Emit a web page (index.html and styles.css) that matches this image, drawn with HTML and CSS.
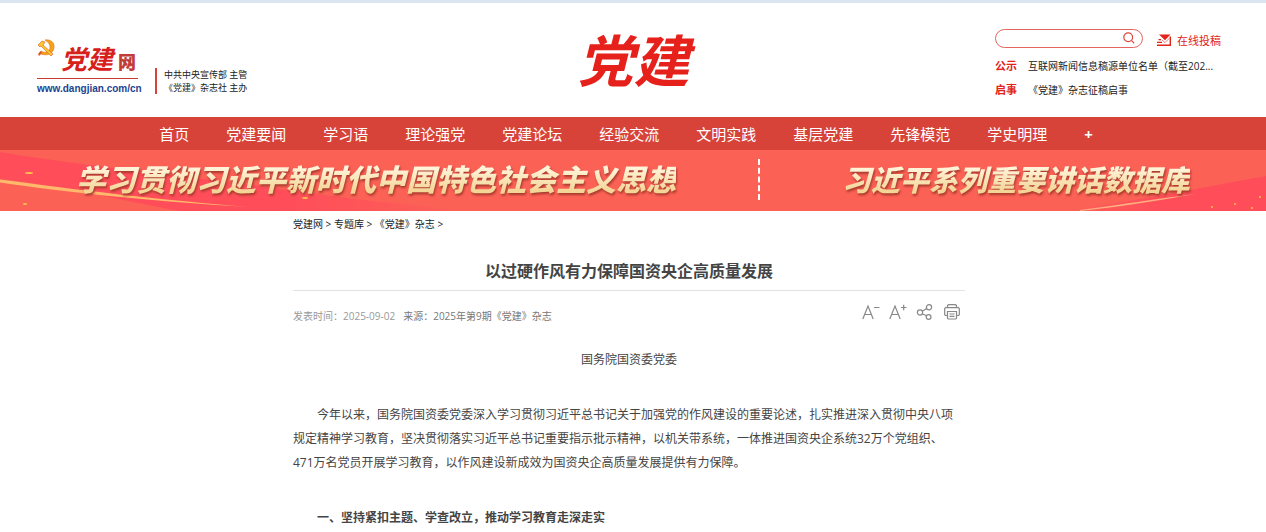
FILE: index.html
```html
<!DOCTYPE html>
<html lang="zh-CN">
<head>
  <meta charset="UTF-8" />
  <meta name="viewport" content="width=device-width, initial-scale=1.0"/>
  <title>以过硬作风有力保障国资央企高质量发展 - 党建网</title>
  <link rel="stylesheet" href="styles.css">
</head>
<body>
  <header class="header">
    <div class="brand">
      <a class="logo" href="#">
        <span class="logo-top">
          <svg class="emblem" viewBox="0 0 18 18" aria-hidden="true">
            <path d="M8 1C14 0 18 4 17 9C16 15 9 18 2 14L4 12C9 15 13 12 13 8C13 5 11 3 8 1Z" fill="#f3a21b" stroke="#e8741c" stroke-width=".6"/>
            <path d="M1 6L5 2L8 3L6 6L16 15L14 17L4 7L3 8Z" fill="#f8c832" stroke="#e4571c" stroke-width=".6"/>
            <path d="M1 15L4 12L5 14L2 17Z" fill="#e4571c"/>
          </svg>
          <span class="logo-name">党建</span>
          <span class="logo-net">网</span>
        </span>
        <span class="logo-url">www.dangjian.com/cn</span>
      </a>
      <p class="sponsor">中共中央宣传部 主管<br>《党建》杂志社 主办</p>
    </div>

    <div class="masthead">党建</div>

    <div class="tools">
      <form class="search-row">
        <div class="search">
          <input type="text" aria-label="搜索">
          <button type="button" aria-label="搜索">
            <svg viewBox="0 0 12 12" aria-hidden="true">
              <circle cx="5.2" cy="5.2" r="4.4"/>
              <path d="M8.6 8.6L11.2 11.4"/>
            </svg>
          </button>
        </div>
        <a class="submit" href="#">
          <svg viewBox="0 0 14 12" aria-hidden="true">
            <path d="M2 .5H13.5L8 6.2Z" fill="#e2231a"/>
            <path d="M13.3 2.5V11.3H0M0 8.4H5M1.5 5.6H4" fill="none" stroke="#e2231a" stroke-width="1.4"/>
            <path d="M5 6L8 8.6L12.6 4" fill="none" stroke="#f0807a"/>
          </svg>
          在线投稿
        </a>
      </form>
      <div class="notice"><b>公示</b><a href="#">互联网新闻信息稿源单位名单（截至202...</a></div>
      <div class="notice"><b>启事</b><a href="#">《党建》杂志征稿启事</a></div>
    </div>
  </header>

  <nav class="nav">
    <a href="#">首页</a>
    <a href="#">党建要闻</a>
    <a href="#">学习语</a>
    <a href="#">理论强党</a>
    <a href="#">党建论坛</a>
    <a href="#">经验交流</a>
    <a href="#">文明实践</a>
    <a href="#">基层党建</a>
    <a href="#">先锋模范</a>
    <a href="#">学史明理</a>
    <a class="more" href="#">+</a>
  </nav>

  <div class="banner">
    <svg class="banner-bg" viewBox="0 0 1266 61" preserveAspectRatio="none" aria-hidden="true">
      <defs>
        <linearGradient id="fade-right">
          <stop offset="0" stop-color="#ff4d5a"/>
          <stop offset=".6" stop-color="#ff4d5a"/>
          <stop offset="1" stop-color="#fc6156"/>
        </linearGradient>
        <linearGradient id="fade-left">
          <stop offset="0" stop-color="#fc6156"/>
          <stop offset=".5" stop-color="#ff4d5a"/>
          <stop offset="1" stop-color="#ff4d5a"/>
        </linearGradient>
      </defs>
      <path d="M0 2C60 12 130 20 260 36C340 48 400 54 470 61H180C120 50 50 34 0 29Z" fill="url(#fade-right)"/>
      <path d="M1060 61C1130 52 1200 38 1266 26V61Z" fill="url(#fade-left)"/>
      <path d="M0 29.5C70 39 160 50 250 57C160 52 70 43 0 32.5Z" fill="#ffb96b"/>
      <path d="M1080 60C1120 55 1160 48 1196 44C1160 50 1120 57 1080 61Z" fill="#ffb080"/>
      <g fill="#ffc04d">
        <ellipse cx="29" cy="23" rx="4" ry="1"/>
        <ellipse cx="25" cy="54" rx="2" ry="1"/>
        <ellipse cx="305" cy="48" rx="3" ry="1"/>
        <circle cx="1212" cy="57" r="1"/>
        <circle cx="1235" cy="54" r="1"/>
        <circle cx="1260" cy="47" r="1"/>
        <circle cx="1252" cy="58" r="1"/>
      </g>
    </svg>
    <a class="slogan" href="#">学习贯彻习近平新时代中国特色社会主义思想</a>
    <span class="divider"></span>
    <a class="slogan slogan-small" href="#">习近平系列重要讲话数据库</a>
  </div>

  <main class="article">
    <div class="crumbs"><a href="#">党建网</a> &gt; <a href="#">专题库</a> &gt; <a href="#">《党建》杂志</a> &gt;</div>
    <h1>以过硬作风有力保障国资央企高质量发展</h1>
    <div class="meta">
      <span class="date">发表时间：2025-09-02</span>
      <span class="source">来源：2025年第9期《党建》杂志</span>
      <div class="actions">
        <button type="button" aria-label="缩小字号">
          <svg viewBox="0 0 18 16" aria-hidden="true"><path d="M.8 15L6 2L11.2 15M2.6 10.5H9.4M12 3.5H17.5"/></svg>
        </button>
        <button type="button" aria-label="放大字号">
          <svg viewBox="0 0 18 16" aria-hidden="true"><path d="M.8 15L6 2L11.2 15M2.6 10.5H9.4M12 3.5H17.5M14.7 .8V6.2"/></svg>
        </button>
        <button type="button" aria-label="分享">
          <svg viewBox="0 0 18 16" aria-hidden="true">
            <circle cx="4" cy="8.5" r="2.6"/><circle cx="13" cy="3.2" r="2.6"/><circle cx="12.6" cy="13" r="2.4"/>
            <path d="M6.2 7.2L10.8 4.5M6.2 9.8L10.5 11.8"/>
          </svg>
        </button>
        <button type="button" aria-label="打印">
          <svg viewBox="0 0 18 16" aria-hidden="true">
            <path d="M4.5 3.5V1.5L5.5 .7H12.5L13.5 1.5V3.5M4.5 11.5H2.5L1.7 10.7V4.5L2.7 3.6H15.3L16.3 4.5V10.7L15.5 11.5H13.5M4.5 7.5H13.5V14.3L12.8 15H5.2L4.5 14.3ZM6.5 10H11.5M6.5 12.4H11.5"/>
          </svg>
        </button>
      </div>
    </div>
    <div class="content">
      <p class="author">国务院国资委党委</p>
      <p>今年以来，国务院国资委党委深入学习贯彻习近平总书记关于加强党的作风建设的重要论述，扎实推进深入贯彻中央八项规定精神学习教育，坚决贯彻落实习近平总书记重要指示批示精神，以机关带系统，一体推进国资央企系统32万个党组织、471万名党员开展学习教育，以作风建设新成效为国资央企高质量发展提供有力保障。</p>
      <p><strong>一、坚持紧扣主题、学查改立，推动学习教育走深走实</strong></p>
    </div>
  </main>
</body>
</html>
```

FILE: styles.css
```css
* {
  box-sizing: border-box;
}
body {
  margin: 0;
  font-family: "Open Sans", "Noto Sans CJK SC", sans-serif;
  font-size: 12px;
  color: #444;
  background: #fff;
}
a {
  color: inherit;
  text-decoration: none;
}
p {
  margin: 0;
}
button {
  padding: 0;
  border: none;
  background: none;
  cursor: pointer;
}
svg {
  display: block;
}

/* header */
.header {
  display: grid;
  grid-template-columns: 1fr auto 1fr;
  align-items: center;
  min-height: 117px;
  padding: 0 46px 0 37px;
  border-top: 3px solid #dce6f2;
}
.brand {
  display: flex;
  align-items: flex-end;
  gap: 17px;
  padding-top: 18px;
}
.logo {
  width: 101px;
}
.logo-top {
  display: flex;
  align-items: flex-end;
  height: 40px;
  border-bottom: 1px solid #c8372f;
}
.emblem {
  width: 18px;
  height: 18px;
  align-self: flex-start;
}
.logo-name {
  margin-left: 6px;
  font-size: 26px;
  font-weight: 700;
  font-style: italic;
  line-height: 38px;
  color: #d7201b;
}
.logo-net {
  margin-left: 5px;
  font-size: 18px;
  font-weight: 900;
  line-height: 32px;
  color: #c23b37;
}
.logo-url {
  display: block;
  font-family: "Liberation Sans", Arial, sans-serif;
  font-size: 10px;
  font-weight: 700;
  line-height: 20px;
  white-space: nowrap;
  color: #1b4391;
}
.sponsor {
  padding-left: 7px;
  margin-bottom: 5px;
  border-left: 2px solid #d7433a;
  font-size: 9px;
  line-height: 13px;
  white-space: nowrap;
  color: #222;
}
.masthead {
  padding-left: 10px;
  font-size: 56px;
  font-weight: 700;
  font-style: italic;
  line-height: 80px;
  color: #e6211b;
}
.tools {
  justify-self: end;
  width: 225px;
  padding-top: 10px;
}
.search-row {
  display: flex;
  align-items: center;
  gap: 14px;
  margin-bottom: 6px;
}
.search {
  display: flex;
  align-items: center;
  width: 148px;
  height: 19px;
  padding-right: 7px;
  border: 1px solid #e4655f;
  border-radius: 10px;
}
.search input {
  flex: 1;
  min-width: 0;
  padding: 0 8px;
  border: none;
  outline: none;
  background: none;
  font-size: 10px;
}
.search svg {
  width: 12px;
  height: 12px;
  fill: none;
  stroke: #e0443c;
  stroke-width: 1.2;
}
.submit {
  display: flex;
  align-items: center;
  gap: 6px;
  padding-top: 3px;
  font-size: 11px;
  white-space: nowrap;
  color: #e2231a;
}
.submit svg {
  width: 14px;
  height: 12px;
}
.notice {
  display: flex;
  gap: 11px;
  font-size: 10px;
  line-height: 24px;
  white-space: nowrap;
  color: #222;
}
.notice b {
  font-size: 11px;
  color: #e2231a;
}

/* navigation */
.nav {
  display: flex;
  justify-content: center;
  gap: 37px;
  padding: 2px 14px 0 0;
  background: #d74339;
  font-size: 15px;
  line-height: 31px;
  color: #fff;
}
.more {
  font-weight: 700;
}

/* banner */
.banner {
  position: relative;
  display: flex;
  align-items: center;
  justify-content: space-between;
  height: 61px;
  padding: 0 76px 2px;
  background: #fc6156;
}
.banner-bg {
  position: absolute;
  inset: 0;
  width: 100%;
  height: 100%;
}
.slogan {
  position: relative;
  font-size: 30px;
  font-weight: 900;
  font-style: italic;
  line-height: 44px;
  white-space: nowrap;
  color: transparent;
  background: linear-gradient(#fff3d8 25%, #f3d596 75%);
  -webkit-background-clip: text;
  background-clip: text;
  filter: drop-shadow(1px 2px 1px #a83a2c);
}
.slogan-small {
  font-size: 29px;
}
.divider {
  position: relative;
  height: 41px;
  border-left: 2px dashed #fff;
}

/* article */
.article {
  max-width: 680px;
  margin: 0 auto;
  padding-right: 8px;
}
.crumbs {
  padding-top: 6px;
  font-size: 10px;
  line-height: 14px;
  color: #222;
}
h1 {
  margin: 28px 0 0;
  padding-bottom: 7px;
  border-bottom: 1px solid #e2e2e2;
  font-size: 16px;
  line-height: 24px;
  text-align: center;
  color: #444;
}
.meta {
  display: flex;
  align-items: center;
  gap: 8px;
  padding-top: 13px;
  font-size: 10px;
  line-height: 24px;
  color: #777;
}
.date {
  color: #999;
}
.actions {
  display: flex;
  gap: 9px;
  margin-left: auto;
  padding: 0 4px 8px 0;
}
.actions svg {
  width: 18px;
  height: 16px;
  fill: none;
  stroke: #888;
  stroke-width: 1.2;
}
.content {
  padding-top: 20px;
  line-height: 24px;
}
.content p {
  padding-right: 6px;
  text-indent: 24px;
}
.content p + p {
  margin-top: 31px;
}
.content .author {
  padding-right: 0;
  text-align: center;
  text-indent: 0;
}
```
